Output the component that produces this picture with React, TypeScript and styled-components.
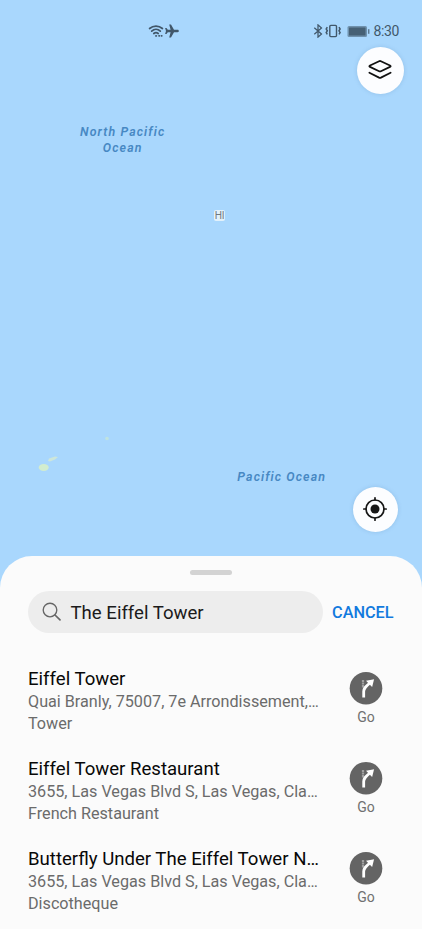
import React from "react";
import styled, { createGlobalStyle } from "styled-components";

const GlobalStyle = createGlobalStyle`
  * { box-sizing: border-box; }
  html, body { margin: 0; padding: 0; }
  body { background: #a9d7fd; overflow: hidden; }
  button { border: 0; padding: 0; margin: 0; font: inherit; cursor: pointer; }
  svg { display: block; flex: none; }
`;

const Screen = styled.main`
  display: flex;
  flex-direction: column;
  width: 422px;
  height: 929px;
  overflow: hidden;
  background: #a9d7fd;
  font-family: Roboto, "Noto Sans", sans-serif;
`;

const MapArea = styled.section`
  position: relative;
  display: flex;
  flex-direction: column;
  align-items: flex-end;
  flex: none;
  height: 556px;
`;

const StatusBar = styled.header`
  display: flex;
  align-items: center;
  justify-content: space-between;
  width: 100%;
  height: 47px;
  padding: 15px 23px 0 148px;
  color: #41576a;
`;

const StatusGroup = styled.div`
  display: flex;
  align-items: center;
`;

const Battery = styled.span`
  display: flex;
  margin: 0 3px 0 5px;
`;

const Clock = styled.span`
  font-size: 14px;
  line-height: 16px;
  letter-spacing: -0.35px;
`;

const RoundButton = styled.button<{ $size: number }>`
  display: flex;
  align-items: center;
  justify-content: center;
  flex: none;
  width: ${(p) => p.$size}px;
  height: ${(p) => p.$size}px;
  padding: 0 1px 1px 0;
  border-radius: 50%;
  background: #fcfdff;
  box-shadow: 0 0 4px rgba(70, 120, 160, 0.22);
`;

const LayersButton = styled(RoundButton)`
  margin-right: 18.5px;
`;

const LocateButton = styled(RoundButton)`
  margin: auto 24.5px 24.5px 0;
`;

const OceanLabel = styled.div<{ $x: number; $y: number }>`
  position: absolute;
  left: ${(p) => p.$x}px;
  top: ${(p) => p.$y}px;
  transform: translateX(-50%);
  color: #4788c3;
  font: italic 600 12.4px/16px Roboto, sans-serif;
  letter-spacing: 1.1px;
  text-align: center;
  white-space: pre;
`;

const StateLabel = styled.div`
  position: absolute;
  left: 214px;
  top: 210px;
  width: 11px;
  height: 11px;
  border-radius: 2px;
  background: rgba(246, 249, 250, 0.75);
  color: #707880;
  font: 10px/11px "Liberation Sans", sans-serif;
  letter-spacing: -0.2px;
  text-align: center;
`;

const Islands = styled.svg`
  position: absolute;
  left: 30px;
  top: 430px;
`;

const Sheet = styled.section`
  flex: 1;
  padding: 14px 28px 0;
  border-radius: 32px 32px 0 0;
  background: #fbfbfb;
`;

const Handle = styled.div`
  width: 42px;
  height: 5px;
  margin: 0 auto 16px;
  border-radius: 3px;
  background: #d3d3d3;
`;

const SearchRow = styled.div`
  display: flex;
  align-items: center;
  height: 42px;
`;

const SearchField = styled.div`
  display: flex;
  align-items: center;
  width: 295px;
  height: 42px;
  padding-left: 14px;
  gap: 8.5px;
  border-radius: 21px;
  background: #ededed;
`;

const Query = styled.span`
  padding-top: 2px;
  color: #1b1b1b;
  font-size: 18.6px;
  line-height: 24px;
  white-space: nowrap;
`;

const Cancel = styled.button`
  margin-left: 9px;
  padding-top: 2px;
  background: none;
  color: #127ade;
  font-size: 16.3px;
  font-weight: 500;
  line-height: 24px;
`;

const Results = styled.ul`
  list-style: none;
  margin: 33px 0 0;
  padding: 0;
`;

const Result = styled.li`
  display: flex;
  align-items: flex-start;
  justify-content: space-between;
  height: 90px;
`;

const Details = styled.div`
  width: 298px;
`;

const Line = styled.div`
  overflow: hidden;
  white-space: nowrap;
`;

const Name = styled(Line)`
  height: 25px;
  padding-top: 1px;
  color: #080808;
  font-size: 18.6px;
  line-height: 24px;
`;

const Meta = styled(Line)`
  height: 22px;
  color: #6b6b6b;
  font-size: 16.18px;
  line-height: 22px;
`;

const Go = styled.button`
  display: flex;
  flex-direction: column;
  align-items: center;
  gap: 4px;
  width: 34px;
  margin: 5px 11px 0 0;
  background: none;
  color: #707070;
  font-size: 14px;
  line-height: 17px;
`;

const WifiIcon = () => (
  <svg width="17" height="14" viewBox="0 0 17 14" fill="none" stroke="currentColor" strokeWidth="1.75" strokeLinecap="round">
    <path d="M1.6 4.5C5.3 1.2 10.7 1.2 14.4 4.5M3.7 7.1c2.5-2.2 6.1-2.2 8.6 0M5.8 9.5c1.2-1 3.2-1 4.4 0" />
    <circle cx="8" cy="11.9" r="0.6" fill="currentColor" strokeWidth="0.7" />
    <path d="M11 11.8h.4M13.5 11.8h.3" strokeWidth="1.7" />
  </svg>
);

const PlaneIcon = () => (
  <svg width="14" height="14" viewBox="0 0 14 14" fill="currentColor">
    <path d="M13.8 7c0-.8-.5-1.2-1.2-1.2H9L6 .4H4.2l1.4 5.4H2.8L1.5 4.1H.1L1 7 .1 9.9h1.4l1.3-1.7h2.8l-1.4 5.4H6l3-5.4h3.6c.7 0 1.2-.4 1.2-1.2z" />
  </svg>
);

const BluetoothIcon = () => (
  <svg width="12" height="14" viewBox="0 0 12 14" fill="none" stroke="currentColor" strokeWidth="1.25">
    <path d="M1.3 3.8 8.5 10 5 13.1V.9L8.5 4 1.3 10.2" />
  </svg>
);

const VibrateIcon = () => (
  <svg width="17" height="14" viewBox="0 0 17 14" fill="none" stroke="currentColor">
    <rect x="4.8" y="1.4" width="6.7" height="11.2" rx="1" strokeWidth="1.4" />
    <path d="M2.3 3.2 1.2 5l1.1 1.8-1.1 1.8 1.1 1.8M14 3.2 15.1 5 14 6.8l1.1 1.8-1.1 1.8" strokeWidth="1.5" />
  </svg>
);

const BatteryIcon = () => (
  <svg width="23" height="13" viewBox="0 0 23 13">
    <rect x="0.5" y="1" width="19.5" height="11" rx="1.5" fill="#6f91ad" />
    <rect x="2" y="2.5" width="16.5" height="8" rx=".5" fill="#466075" />
    <path d="M21.7 4.2v4.6" stroke="#5d7a92" strokeWidth="1.5" />
  </svg>
);

const LayersIcon = () => (
  <svg width="26" height="22" viewBox="0 0 26 22" fill="none" stroke="#111" strokeWidth="1.8" strokeLinecap="round" strokeLinejoin="round">
    <path d="M12.1 2.2Q13 1.8 13.9 2.2L23 6.5Q24.3 7.2 23 7.9l-9.1 4.3q-.9.4-1.8 0L3 7.9Q1.7 7.2 3 6.5zM2.4 13.7l9.7 4.9q.9.4 1.8 0l9.7-4.9" />
  </svg>
);

const LocateIcon = () => (
  <svg width="26" height="26" viewBox="0 0 26 26" fill="none" stroke="#161616" strokeWidth="1.7" strokeLinecap="round">
    <circle cx="13" cy="13" r="9" />
    <circle cx="13" cy="13" r="4.5" fill="#161616" stroke="none" />
    <path d="M13 1.8V4M13 22v2.2M1.8 13H4M22 13h2.2" />
  </svg>
);

const SearchIcon = () => (
  <svg width="20" height="20" viewBox="0 0 20 20" fill="none" stroke="#666" strokeWidth="1.35" strokeLinecap="round">
    <circle cx="8" cy="8" r="6.8" />
    <path d="m13 13 5 4.8" strokeWidth="1.7" />
  </svg>
);

const GoIcon = () => (
  <svg width="34" height="34" viewBox="0 0 34 34">
    <circle cx="17" cy="17.2" r="16.3" fill="#646464" />
    <path d="M14 9v8" stroke="#a2a2a2" strokeWidth="2.2" strokeDasharray="2 .5" />
    <path d="M14.7 26.4V20.5c0-3 1.4-4.5 6.2-8.5" fill="none" stroke="#fff" strokeWidth="2.8" />
    <path d="m17 9.7 8.1-1.4-2 7.8z" fill="#fff" />
  </svg>
);

const places = [
  { name: "Eiffel Tower", address: "Quai Branly, 75007, 7e Arrondissement,…", kind: "Tower" },
  { name: "Eiffel Tower Restaurant", address: "3655, Las Vegas Blvd S, Las Vegas, Cla…", kind: "French Restaurant" },
  { name: "Butterfly Under The Eiffel Tower N…", address: "3655, Las Vegas Blvd S, Las Vegas, Cla…", kind: "Discotheque" },
];

export default function App() {
  return (
    <Screen>
      <GlobalStyle />
      <MapArea>
        <StatusBar>
          <StatusGroup>
            <WifiIcon />
            <PlaneIcon />
          </StatusGroup>
          <StatusGroup>
            <BluetoothIcon />
            <VibrateIcon />
            <Battery><BatteryIcon /></Battery>
            <Clock>8:30</Clock>
          </StatusGroup>
        </StatusBar>
        <LayersButton $size={47} aria-label="Map layers"><LayersIcon /></LayersButton>
        <LocateButton $size={45} aria-label="My location"><LocateIcon /></LocateButton>
        <OceanLabel $x={122.7} $y={124}>{"North Pacific\nOcean"}</OceanLabel>
        <OceanLabel $x={281.7} $y={469}>Pacific Ocean</OceanLabel>
        <StateLabel>HI</StateLabel>
        <Islands width="84" height="52" viewBox="0 0 84 52">
          <ellipse cx="13.7" cy="37.5" rx="5" ry="3.4" fill="#d2edcf" />
          <path d="m18 31 1-2.5 6-2 3 .5-3 2.5-5 2z" fill="#cde6da" />
          <circle cx="77" cy="8.5" r="1.8" fill="#c0e3df" />
        </Islands>
      </MapArea>
      <Sheet>
        <Handle />
        <SearchRow>
          <SearchField><SearchIcon /><Query>The Eiffel Tower</Query></SearchField>
          <Cancel>CANCEL</Cancel>
        </SearchRow>
        <Results>
          {places.map((place) => (
            <Result key={place.name}>
              <Details>
                <Name>{place.name}</Name>
                <Meta>{place.address}</Meta>
                <Meta>{place.kind}</Meta>
              </Details>
              <Go><GoIcon />Go</Go>
            </Result>
          ))}
        </Results>
      </Sheet>
    </Screen>
  );
}
